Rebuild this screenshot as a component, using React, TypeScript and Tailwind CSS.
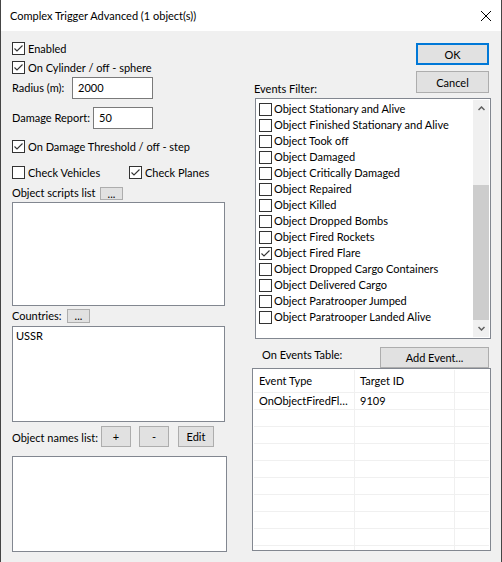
import React from 'react';

const events = [
  { label: 'Object Stationary and Alive' },
  { label: 'Object Finished Stationary and Alive' },
  { label: 'Object Took off' },
  { label: 'Object Damaged' },
  { label: 'Object Critically Damaged' },
  { label: 'Object Repaired' },
  { label: 'Object Killed' },
  { label: 'Object Dropped Bombs' },
  { label: 'Object Fired Rockets' },
  { label: 'Object Fired Flare', checked: true },
  { label: 'Object Dropped Cargo Containers' },
  { label: 'Object Delivered Cargo' },
  { label: 'Object Paratrooper Jumped' },
  { label: 'Object Paratrooper Landed Alive' },
];

function Box({ checked }: { checked?: boolean }) {
  return (
    <span className="flex h-[13px] w-[13px] shrink-0 border border-[#333333] bg-white">
      {checked && (
        <svg width="11" height="11" viewBox="0 0 11 11">
          <polyline points="1.5,5.5 4,8 9.5,2.5" fill="none" stroke="#333333" strokeWidth="1.1" />
        </svg>
      )}
    </span>
  );
}

function CheckRow({ label, checked, className = '' }: { label: string; checked?: boolean; className?: string }) {
  return (
    <div className={`flex h-[19px] items-center ${className}`}>
      <Box checked={checked} />
      <span className="ml-[3px] whitespace-nowrap">{label}</span>
    </div>
  );
}

function Btn({ children, className = '' }: { children: React.ReactNode; className?: string }) {
  return (
    <div className={`flex shrink-0 items-center justify-center bg-[#e1e1e1] leading-none ${className}`}>
      {children}
    </div>
  );
}

function Input({ value, className = '' }: { value: string; className?: string }) {
  return (
    <div className={`flex h-[22px] items-center border border-[#7a7a7a] bg-white pl-[5px] ${className}`}>
      {value}
    </div>
  );
}

function Chevron({ down }: { down?: boolean }) {
  return (
    <svg width="7" height="5" viewBox="0 0 7 5">
      <polyline
        points={down ? '0.5,1 3.5,4 6.5,1' : '0.5,4 3.5,1 6.5,4'}
        fill="none"
        stroke="#606060"
        strokeWidth="1.5"
      />
    </svg>
  );
}

function LeftColumn() {
  return (
    <div className="flex w-[216px] flex-col">
      <CheckRow className="mt-[8px]" checked label="Enabled" />
      <CheckRow checked label="On Cylinder / off - sphere" />
      <div className="flex h-[22px] items-center">
        <span className="w-[60px]">Radius (m):</span>
        <Input className="w-[81px]" value="2000" />
      </div>
      <div className="mt-[8px] flex h-[22px] items-center">
        <span className="w-[81px] whitespace-nowrap">Damage Report:</span>
        <Input className="w-[60px]" value="50" />
      </div>
      <CheckRow className="mt-[8px]" checked label="On Damage Threshold / off - step" />
      <div className="mt-[7px] flex">
        <CheckRow className="w-[117px]" label="Check Vehicles" />
        <CheckRow checked label="Check Planes" />
      </div>
      <div className="mt-[4px] flex h-[14px] items-center">
        <span className="w-[88px] whitespace-nowrap">Object scripts list</span>
        <Btn className="h-[13px] w-[23px] border border-[#adadad]">...</Btn>
      </div>
      <div className="mt-[2px] h-[104px] w-[213px] border border-[#828790] bg-white" />
      <div className="mt-[2px] flex h-[15px] items-center">
        <span className="w-[55px]">Countries:</span>
        <Btn className="h-[14px] w-[23px] border border-[#adadad]">...</Btn>
      </div>
      <div className="mt-[3px] h-[96px] w-[213px] border border-[#828790] bg-white pl-[3px] pt-[1px]">USSR</div>
      <div className="mt-[4px] flex h-[21px] items-center">
        <span className="w-[89px] whitespace-nowrap pt-[2px]">Object names list:</span>
        <Btn className="h-[21px] w-[30px] border border-[#adadad]">+</Btn>
        <Btn className="ml-[8px] h-[21px] w-[30px] border border-[#adadad]">-</Btn>
        <Btn className="ml-[9px] h-[21px] w-[36px] border border-[#adadad]">Edit</Btn>
      </div>
      <div className="mt-[9px] h-[96px] w-[215px] border border-[#828790] bg-white" />
    </div>
  );
}

function EventsList() {
  return (
    <div className="ml-[3px] mt-[1px] flex h-[241px] w-[236px] border border-[#828790] bg-white py-[1px] pr-[1px]">
      <div className="flex-1 overflow-hidden pl-[3px] pt-[1px]">
        {events.map((e) => (
          <div key={e.label} className="flex h-[16px] items-center">
            <Box checked={e.checked} />
            <span className="ml-[2px] whitespace-nowrap">{e.label}</span>
          </div>
        ))}
      </div>
      <div className="flex w-[16px] flex-col bg-[#f0f0f0]">
        <div className="flex h-[17px] items-center justify-center">
          <Chevron />
        </div>
        <div className="flex flex-1 flex-col justify-end">
          <div className="h-[135px] bg-[#cdcdcd]" />
        </div>
        <div className="flex h-[17px] items-center justify-center">
          <Chevron down />
        </div>
      </div>
    </div>
  );
}

function EventsTable() {
  const rows = Array.from({ length: 10 }, (_, i) => i);
  return (
    <div className="flex h-[183px] w-[239px] flex-col overflow-hidden border border-[#828790] bg-white p-[1px]">
      <div className="flex h-[23px] shrink-0 border-b border-[#f0f0f0]">
        <div className="flex w-[101px] items-center border-r border-[#f0f0f0] pl-[5px]">Event Type</div>
        <div className="flex w-[100px] items-center border-r border-[#f0f0f0] pl-[5px]">Target ID</div>
        <div className="flex-1" />
      </div>
      {rows.map((i) => (
        <div key={i} className="flex h-[17px] shrink-0 border-b border-[#f0f0f0]">
          <div className="flex w-[101px] items-center border-r border-[#f0f0f0] pl-[5px] whitespace-nowrap">
            {i === 0 ? 'OnObjectFiredFl…' : ''}
          </div>
          <div className="flex w-[100px] items-center border-r border-[#f0f0f0] pl-[5px]">{i === 0 ? '9109' : ''}</div>
          <div className="flex-1" />
        </div>
      ))}
    </div>
  );
}

function RightColumn() {
  return (
    <div className="ml-[24px] flex w-[239px] flex-col">
      <div className="mt-[12px] flex justify-end pr-[2px]">
        <Btn className="h-[22px] w-[73px] border-2 border-[#0078d7]">OK</Btn>
      </div>
      <div className="mt-[6px] flex items-start justify-between pr-[2px]">
        <span className="ml-[2px] mt-[10px]">Events Filter:</span>
        <Btn className="h-[22px] w-[73px] border border-[#adadad]">Cancel</Btn>
      </div>
      <EventsList />
      <div className="mt-[8px] flex items-start justify-between pr-[2px]">
        <span className="ml-[10px]">On Events Table:</span>
        <Btn className="h-[21px] w-[109px] border border-[#adadad]">Add Event...</Btn>
      </div>
      <EventsTable />
    </div>
  );
}

export default function App() {
  return (
    <div className="h-[562px] w-[502px] overflow-hidden border-x border-[#454545] bg-[#f0f0f0] font-[family-name:Lato,sans-serif] text-[11px] leading-[16px] text-black">
      <div className="flex h-[31px] items-center justify-between bg-white pl-[9px] pr-[10px]">
        <span>Complex Trigger Advanced (1 object(s))</span>
        <svg width="10" height="10" viewBox="0 0 10 10">
          <path d="M0 0L10 10M10 0L0 10" stroke="#000" strokeWidth="1" />
        </svg>
      </div>
      <div className="flex pl-[11px]">
        <LeftColumn />
        <RightColumn />
      </div>
    </div>
  );
}
